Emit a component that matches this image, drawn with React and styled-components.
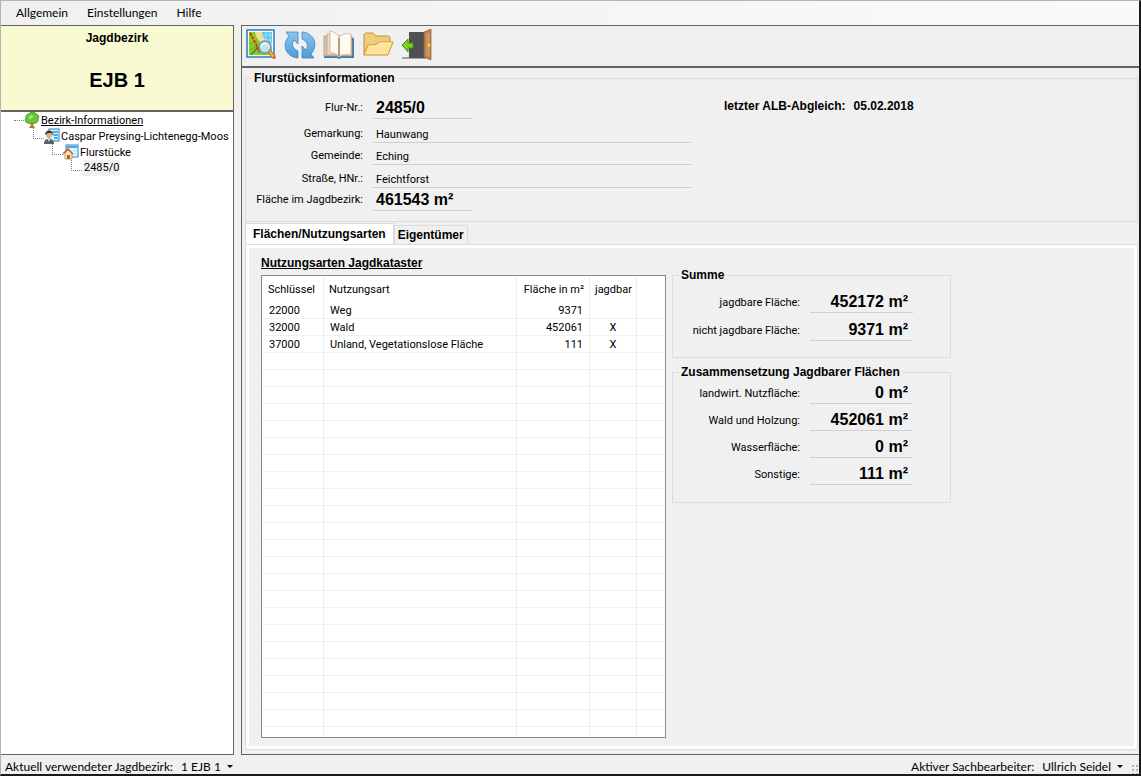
import styled, { createGlobalStyle } from "styled-components";

const usages = [
  { key: "22000", name: "Weg", area: "9371", hunt: "" },
  { key: "32000", name: "Wald", area: "452061", hunt: "X" },
  { key: "37000", name: "Unland, Vegetationslose Fläche", area: "111", hunt: "X" },
];
const emptyRows = Array.from({ length: 23 }, (_, i) => i);

const parcel = [
  { id: "flurnr", label: "Flur-Nr.:", value: "2485/0", strong: true, height: 29 },
  { id: "gemarkung", label: "Gemarkung:", value: "Haunwang", height: 24 },
  { id: "gemeinde", label: "Gemeinde:", value: "Eching", height: 22 },
  { id: "strasse", label: "Straße, HNr.:", value: "Feichtforst", height: 23 },
  { id: "flaeche", label: "Fläche im Jagdbezirk:", value: "461543 m²", strong: true, height: 23 },
];

const totals = [
  { id: "jagdbar", label: "jagdbare Fläche:", value: "452172 m²" },
  { id: "nichtjagdbar", label: "nicht jagdbare Fläche:", value: "9371 m²" },
];

const composition = [
  { id: "nutz", label: "landwirt. Nutzfläche:", value: "0 m²" },
  { id: "wald", label: "Wald und Holzung:", value: "452061 m²" },
  { id: "wasser", label: "Wasserfläche:", value: "0 m²" },
  { id: "sonstige", label: "Sonstige:", value: "111 m²" },
];

function MapIcon() {
  return (
    <svg width="32" height="32" viewBox="0 0 32 32">
      <rect x="2" y="1" width="27" height="27" fill="#fff" stroke="#1e7fbd" strokeWidth="1.5" />
      <rect x="4" y="3" width="23" height="23" fill="#5fc4ee" />
      <path d="M16 6h11M16 11h11M21 3v12M25 3v12" stroke="#9be0fa" strokeWidth="1" />
      <path d="M4 3h8l6 9 9 6v8H4z" fill="#8ac926" />
      <path d="M10 3h7c0 6 4 9 10 11v6C18 17 11 11 10 3z" fill="#f3dfa0" />
      <path d="M4 15l8-3M4 21l9-4" stroke="#6fae1c" fill="none" />
      <path d="M6 26l7-8" stroke="#4a8a1a" strokeWidth="1.5" />
      <path d="M5 4l6 11 3 8" stroke="#e01818" strokeWidth="1.6" strokeDasharray="3 1" fill="none" />
      <path d="M25 23l4 5" stroke="#c87820" strokeWidth="4" strokeLinecap="round" />
      <path d="M25 23l3 4" stroke="#f5b34c" strokeWidth="2" strokeLinecap="round" />
      <circle cx="20" cy="18" r="6" fill="#c4e7f9" fillOpacity=".9" stroke="#6995b5" strokeWidth="1.6" />
      <path d="M16 18a4 4 0 0 1 6-3" stroke="#fff" strokeWidth="1.5" fill="none" />
    </svg>
  );
}

function RefreshIcon() {
  return (
    <svg width="32" height="32" viewBox="0 0 32 32">
      <defs>
        <linearGradient id="blue" x1="0" y1="0" x2="0" y2="1">
          <stop offset="0" stopColor="#8bc7ef" />
          <stop offset="1" stopColor="#4b9ad8" />
        </linearGradient>
      </defs>
      <g fill="url(#blue)" stroke="#3f87bf" strokeWidth=".8" strokeLinejoin="round">
        <path d="M2 3h12v12l-4-4c-3 5-1 9 4 11v7C2 28-3 16 5 7z" />
        <path d="M30 29H18V17l4 4c3-5 1-9-4-11V3c12 1 17 13 9 22z" />
      </g>
    </svg>
  );
}

function BookIcon() {
  return (
    <svg width="32" height="32" viewBox="0 0 32 32">
      <path d="M1 9h30v20H18l-2 1-2-1H1z" fill="#3f7cae" />
      <path d="M1 7h28v20H18l-2 1-2-1H1z" fill="#d9c4ab" stroke="#a98d70" strokeWidth=".7" />
      <path d="M4 5c5-1 10 0 12 3v20c-3-3-7-3-12-2z" fill="#ecdcc7" stroke="#b89a78" strokeWidth=".7" />
      <path d="M16 8c3-3 7-4 12-3v21c-5-1-9-1-12 2z" fill="#fffaf2" stroke="#c3a98a" strokeWidth=".7" />
      <path d="M7 2c4 1 8 3 9 6v20c-1-3-5-4-9-5z" fill="#fff9ef" stroke="#c3a98a" strokeWidth=".7" />
      <path d="M16 9v18" stroke="#b08758" strokeWidth="1.5" />
    </svg>
  );
}

function FolderIcon() {
  return (
    <svg width="32" height="32" viewBox="0 0 32 32">
      <path d="M2 26V6c0-1 1-2 2-2h7l3 3h12c1 0 2 1 2 2v5z" fill="#f0cd7c" stroke="#c69030" />
      <path d="M2 26l4-10h7l4-3h14l-5 13z" fill="#ffe199" stroke="#c99638" strokeLinejoin="round" />
      <path d="M7 17h7l4-3h11" stroke="#fff2bd" fill="none" />
    </svg>
  );
}

function ExitIcon() {
  return (
    <svg width="32" height="32" viewBox="0 0 32 32">
      <path d="M8 3h16v26H8z" fill="#505054" />
      <path d="M1 29h24" stroke="#555" />
      <path d="M23 3l7-3v31l-7-3z" fill="#b9804d" stroke="#8d5c31" strokeWidth=".7" />
      <path d="M25 5l4-2v25l-4-2z" fill="#cb9561" />
      <circle cx="28" cy="16" r="1.5" fill="#ffd147" />
      <path d="M1 16l6-6v4h5v5H7v4z" fill="#7fd11e" stroke="#3f8f0e" strokeLinejoin="round" />
    </svg>
  );
}

function TreeIcon() {
  return (
    <svg width="16" height="16" viewBox="0 0 16 16">
      <path d="M6 9h4l-1 4 2 3H5l2-3z" fill="#b9762b" />
      <path d="M4 11a3 3 0 0 1-2-5 3 3 0 0 1 3-4 4 4 0 0 1 7 0 3 3 0 0 1 2 5 3 3 0 0 1-3 4c-2 1-5 1-7 0z" fill="#6cc437" stroke="#398817" strokeWidth=".8" />
      <path d="M4 6l3-3 3 1-3 3z" fill="#a9e768" />
    </svg>
  );
}

function OwnerIcon() {
  return (
    <svg width="16" height="16" viewBox="0 0 16 16">
      <rect x="5" y="1" width="10" height="12" fill="#d8f1ff" stroke="#2384c6" />
      <path d="M8 4h6M9 7h5M10 10h4" stroke="#4fb1e8" strokeWidth="2" />
      <path d="M0 16c0-4 2-5 5-5s5 1 5 5z" fill="#596068" />
      <path d="M4 11h2l-1 3z" fill="#fff" />
      <circle cx="5" cy="7" r="3" fill="#e4ad7c" />
      <path d="M1 7c0-6 8-6 8 0L7 5H4z" fill="#46301f" />
    </svg>
  );
}

function ParcelIcon() {
  return (
    <svg width="16" height="16" viewBox="0 0 16 16">
      <rect x="3" y="1" width="12" height="12" fill="#e9f7ff" stroke="#2384c6" />
      <path d="M4 3h10" stroke="#47a9e3" strokeWidth="2" />
      <path d="M10 7h4M10 10h4" stroke="#a2d8f4" />
      <path d="M2 9l3-3 4 3v6H2z" fill="#fbe4bd" stroke="#b07b42" strokeWidth=".7" />
      <path d="M0 10l5-5 5 5" stroke="#cc6726" strokeWidth="1.6" fill="none" />
      <path d="M4 11h3v4H4z" fill="#a66a34" />
    </svg>
  );
}

function Fields({ items, gap }) {
  return (
    <SumFields $gap={gap}>
      {items.map(({ id, label, value }) => (
        <SumRow key={id}>
          <label htmlFor={id}>{label}</label>
          <SumInput id={id} defaultValue={value} readOnly />
        </SumRow>
      ))}
    </SumFields>
  );
}

function App() {
  return (
    <>
      <GlobalStyle />
      <Window>
        <MenuBar>
          <MenuButton>Allgemein</MenuButton>
          <MenuButton>Einstellungen</MenuButton>
          <MenuButton>Hilfe</MenuButton>
        </MenuBar>

        <Body>
          <Sidebar>
            <District>
              <h2>Jagdbezirk</h2>
              <h1>EJB 1</h1>
            </District>
            <Tree>
              <TreeRow $level={0}>
                <TreeIcon />
                <a href="#bezirk">Bezirk-Informationen</a>
              </TreeRow>
              <TreeRow $level={1}>
                <OwnerIcon />
                <span>Caspar Preysing-Lichtenegg-Moos</span>
              </TreeRow>
              <TreeRow $level={2}>
                <ParcelIcon />
                <span>Flurstücke</span>
              </TreeRow>
              <TreeRow $level={3}>
                <Selected>2485/0</Selected>
              </TreeRow>
            </Tree>
          </Sidebar>

          <Main>
            <Toolbar>
              <ToolButton aria-label="Karte"><MapIcon /></ToolButton>
              <ToolButton aria-label="Aktualisieren"><RefreshIcon /></ToolButton>
              <ToolButton aria-label="Buch"><BookIcon /></ToolButton>
              <ToolButton aria-label="Ordner"><FolderIcon /></ToolButton>
              <ToolButton aria-label="Beenden"><ExitIcon /></ToolButton>
            </Toolbar>

            <Info>
              <legend>Flurstücksinformationen</legend>
              <div>
                {parcel.map(({ id, label, value, strong, height }) => (
                  <InfoRow key={id} $height={height} $strong={strong}>
                    <label htmlFor={id}>{label}</label>
                    <InfoInput id={id} $strong={strong} defaultValue={value} readOnly />
                  </InfoRow>
                ))}
              </div>
              <Sync>
                <span>letzter ALB-Abgleich:</span>
                <span>05.02.2018</span>
              </Sync>
            </Info>

            <Tabs role="tablist">
              <Tab role="tab" aria-selected="true" $active>Flächen/Nutzungsarten</Tab>
              <Tab role="tab" aria-selected="false">Eigentümer</Tab>
            </Tabs>

            <TabPage>
              <UsageColumn>
                <h3>Nutzungsarten Jagdkataster</h3>
                <ListBox>
                  <Table>
                    <colgroup>
                      <col width="61" />
                      <col width="193" />
                      <col width="73" />
                      <col width="47" />
                      <col />
                    </colgroup>
                    <thead>
                      <tr>
                        <th>Schlüssel</th>
                        <th>Nutzungsart</th>
                        <th>Fläche in m²</th>
                        <th>jagdbar</th>
                        <th></th>
                      </tr>
                    </thead>
                    <tbody>
                      {usages.map(({ key, name, area, hunt }) => (
                        <tr key={key}>
                          <td>{key}</td>
                          <td>{name}</td>
                          <td>{area}</td>
                          <td>{hunt}</td>
                          <td></td>
                        </tr>
                      ))}
                      {emptyRows.map((row) => (
                        <tr key={row}>
                          <td></td>
                          <td></td>
                          <td></td>
                          <td></td>
                          <td></td>
                        </tr>
                      ))}
                    </tbody>
                  </Table>
                </ListBox>
              </UsageColumn>

              <Summary>
                <Group $top={9} $bottom={16}>
                  <legend>Summe</legend>
                  <Fields items={totals} gap={6} />
                </Group>
                <Group $top={3} $bottom={17}>
                  <legend>Zusammensetzung Jagdbarer Flächen</legend>
                  <Fields items={composition} gap={5} />
                </Group>
              </Summary>
            </TabPage>
          </Main>
        </Body>

        <StatusBar>
          <span>Aktuell verwendeter Jagdbezirk:</span>
          <StatusButton>1 EJB 1</StatusButton>
          <Spacer />
          <span>Aktiver Sachbearbeiter:</span>
          <StatusButton>Ullrich Seidel</StatusButton>
          <Grip />
        </StatusBar>
      </Window>
    </>
  );
}

export default App;

const GlobalStyle = createGlobalStyle`
  * {
    box-sizing: border-box;
  }
  body {
    margin: 0;
    background: #f0f0f0;
    color: #000;
    font-family: Roboto, "Liberation Sans", Arial, sans-serif;
    font-size: 11px;
  }
  h1, h2, h3, legend {
    margin: 0;
    font-family: "Liberation Sans", Arial, sans-serif;
  }
  button {
    border: 0;
    padding: 0;
    background: none;
    color: inherit;
    font: inherit;
  }
  input {
    font-family: inherit;
    color: inherit;
  }
`;

const Window = styled.div`
  display: flex;
  flex-direction: column;
  min-height: 100vh;
  border: 1px solid #b4b4b4;
  border-right: 2px solid #1a1a1a;
  border-bottom: 2px solid #1a1a1a;
`;

const MenuBar = styled.nav`
  display: flex;
  gap: 19px;
  height: 24px;
  padding-left: 15px;
  background: linear-gradient(to right, #f0f0f0, #fafafa);
  font-family: Lato, "Segoe UI", sans-serif;
  font-size: 12px;
`;

const MenuButton = styled.button`
  height: 22px;
`;

const Body = styled.div`
  flex: 1;
  display: flex;
  gap: 7px;
`;

const Sidebar = styled.aside`
  width: 233px;
  flex-shrink: 0;
  background: #fff;
  border: 1px solid #646464;
  border-left: 0;
`;

const District = styled.div`
  height: 86px;
  padding-top: 5px;
  border-bottom: 2px solid #646464;
  background: #fafad2;
  text-align: center;

  h2 {
    font-size: 12px;
    line-height: 15px;
  }
  h1 {
    margin-top: 22px;
    font-size: 20px;
    line-height: 24px;
  }
`;

const Tree = styled.div`
  padding-left: 13px;
`;

const TreeRow = styled.div`
  display: flex;
  align-items: center;
  height: 16px;
  padding-left: ${({ $level }) => $level * 19}px;
  white-space: nowrap;

  &::before {
    content: "";
    width: 10px;
    height: ${({ $level }) => ($level ? 10 : 1)}px;
    align-self: ${({ $level }) => ($level ? "flex-start" : "center")};
    border-bottom: 1px dotted #808080;
    border-left: ${({ $level }) => ($level ? "1px dotted #808080" : "0")};
  }
  a {
    color: #000;
  }
  a, span {
    margin-left: 1px;
  }
`;

const Selected = styled.span`
  padding: 0 1px;
  background: #f0f0f0;
  line-height: 16px;
`;

const Main = styled.main`
  flex: 1;
  min-width: 0;
  display: flex;
  flex-direction: column;
  padding-bottom: 4px;
  border: 1px solid #646464;
  border-right: 0;
`;

const Toolbar = styled.div`
  display: flex;
  gap: 7px;
  height: 42px;
  padding: 3px;
  border-bottom: 2px solid #646464;
`;

const ToolButton = styled.button`
  width: 32px;
  height: 32px;
`;

const Info = styled.fieldset`
  display: flex;
  height: 151px;
  min-width: 0;
  margin: 3px 1px 0 3px;
  padding: 5px 0 0;
  border: 1px solid #dcdcdc;

  legend {
    margin-left: 6px;
    padding: 0 2px;
    font-size: 12px;
    font-weight: bold;
    line-height: 14px;
  }
`;

const InfoRow = styled.div`
  display: flex;
  align-items: flex-end;
  gap: 10px;
  height: ${({ $height }) => $height}px;

  label {
    width: 117px;
    padding-bottom: ${({ $strong }) => ($strong ? 4 : 2)}px;
    text-align: right;
    line-height: 14px;
  }
`;

const InfoInput = styled.input`
  width: ${({ $strong }) => ($strong ? 100 : 318)}px;
  height: ${({ $strong }) => ($strong ? 21 : 17)}px;
  padding: 0 3px;
  border: 0;
  border-bottom: 1px solid #d0d0d0;
  background: transparent;
  font-family: ${({ $strong }) => ($strong ? '"Liberation Sans", Arial, sans-serif' : "inherit")};
  font-size: ${({ $strong }) => ($strong ? 16 : 11)}px;
  font-weight: ${({ $strong }) => ($strong ? "bold" : "normal")};
`;

const Sync = styled.div`
  display: flex;
  gap: 8px;
  margin: 9px 0 0 33px;
  font-family: "Liberation Sans", Arial, sans-serif;
  font-size: 12px;
  font-weight: bold;
`;

const Tabs = styled.div`
  display: flex;
  align-items: flex-end;
  height: 21px;
  margin: 1px 1px 0 3px;
`;

const Tab = styled.button`
  height: ${({ $active }) => ($active ? 21 : 19)}px;
  padding: 0 ${({ $active }) => ($active ? 7 : 3)}px;
  border: 1px solid #dcdcdc;
  border-bottom: 0;
  background: ${({ $active }) => ($active ? "#fff" : "#f0f0f0")};
  font-family: "Liberation Sans", Arial, sans-serif;
  font-size: 12px;
  font-weight: bold;
`;

const TabPage = styled.section`
  flex: 1;
  display: flex;
  gap: 6px;
  margin: 0 1px 0 3px;
  padding: 10px 11px 11px 15px;
  border: 1px solid #dcdcdc;
  box-shadow: inset 0 0 0 3px #fff;
`;

const UsageColumn = styled.div`
  display: flex;
  flex-direction: column;
  width: 405px;

  h3 {
    padding-bottom: 4px;
    font-size: 12px;
    line-height: 16px;
    text-decoration: underline;
  }
`;

const ListBox = styled.div`
  flex: 1;
  padding: 1px;
  border: 1px solid #828790;
  background: #fff;
`;

const Table = styled.table`
  width: 100%;
  table-layout: fixed;
  border-collapse: separate;
  border-spacing: 0;

  th, td {
    padding: 0 6px;
    border-right: 1px solid #ececec;
    text-align: left;
    font-weight: normal;
    white-space: nowrap;
  }
  th {
    height: 25px;
    padding: 0 5px;
  }
  td {
    height: 17px;
    border-bottom: 1px solid #f0f0f0;
  }
  tbody tr:last-child td {
    height: 8px;
    border-bottom: 0;
  }
  th:nth-child(3), td:nth-child(3) {
    text-align: right;
  }
  th:nth-child(4), td:nth-child(4) {
    text-align: center;
  }
  th:last-child, td:last-child {
    border-right: 0;
  }
`;

const Summary = styled.div`
  display: flex;
  flex-direction: column;
  gap: 7px;
  width: 279px;
  padding-top: 13px;
`;

const Group = styled.fieldset`
  min-width: 0;
  margin: 0;
  padding: ${({ $top, $bottom }) => `${$top}px 0 ${$bottom}px`};
  border: 1px solid #dcdcdc;

  legend {
    margin-left: 6px;
    padding: 0 2px;
    font-size: 12px;
    font-weight: bold;
    line-height: 14px;
  }
`;

const SumFields = styled.div`
  display: flex;
  flex-direction: column;
  gap: ${({ $gap }) => $gap}px;
`;

const SumRow = styled.div`
  display: flex;
  align-items: center;
  gap: 10px;

  label {
    width: 127px;
    text-align: right;
  }
`;

const SumInput = styled.input`
  width: 103px;
  height: 22px;
  padding: 0 5px 0 0;
  border: 0;
  border-bottom: 1px solid #d0d0d0;
  background: transparent;
  font-family: "Liberation Sans", Arial, sans-serif;
  font-size: 16px;
  font-weight: bold;
  text-align: right;
`;

const StatusBar = styled.footer`
  display: flex;
  align-items: center;
  height: 19px;
  padding: 4px 0 0 4px;
  gap: 8px;
  font-family: Lato, "Segoe UI", sans-serif;
  font-size: 12px;
`;

const StatusButton = styled.button`
  display: flex;
  align-items: center;
  gap: 6px;

  &::after {
    content: "";
    border: 3px solid transparent;
    border-top-color: #000;
    border-bottom: 0;
  }
`;

const Spacer = styled.div`
  flex: 1;
`;

const Grip = styled.div`
  width: 8px;
  height: 10px;
  align-self: flex-end;
  background: radial-gradient(#b4b4b4 1px, transparent 1px) 0 0 / 4px 4px;
`;
